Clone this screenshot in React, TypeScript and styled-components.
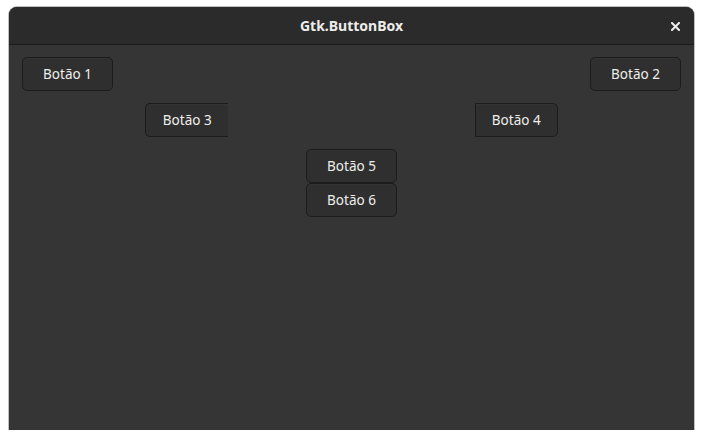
import React from "react";
import styled, { createGlobalStyle } from "styled-components";

const Global = createGlobalStyle`
  html, body { margin: 0; padding: 0; background: #ffffff; }
  body { font-family: "Noto Sans", "Open Sans", sans-serif; }
`;

const Page = styled.div`
  padding: 7px 0 0 9px;
`;

const Window = styled.div`
  width: 685px;
  height: 423px;
  background: #353535;
  border-radius: 8px 8px 0 0;
  overflow: hidden;
  display: flex;
  flex-direction: column;
  box-shadow: 0 0 0 1px rgba(0, 0, 0, 0.25);
`;

const HeaderBar = styled.div`
  height: 37px;
  flex: none;
  background: #2b2b2b;
  border-bottom: 1px solid #1b1b1b;
  display: flex;
  align-items: center;
  justify-content: center;
  position: relative;
`;

const Title = styled.div`
  color: #eeeeec;
  font-weight: 700;
  font-size: 14px;
`;

const CloseButton = styled.div`
  position: absolute;
  right: 12px;
  top: 12px;
  width: 14px;
  height: 14px;
  display: flex;
  align-items: center;
  justify-content: center;
`;

const Content = styled.div`
  padding: 12px 13px;
  display: flex;
  flex-direction: column;
  gap: 12px;
`;

const Row = styled.div<{ $justify: string }>`
  display: flex;
  justify-content: ${(p) => p.$justify};
`;

const Column = styled.div`
  display: flex;
  flex-direction: column;
  align-items: center;
`;

const Button = styled.button<{ $w: number; $noRight?: boolean; $squareLeft?: boolean }>`
  width: ${(p) => p.$w}px;
  height: 34px;
  box-sizing: border-box;
  background: #2f2f2f;
  border: 1px solid #1c1c1c;
  border-radius: 5px;
  ${(p) => (p.$noRight ? "border-right: none; border-top-right-radius: 0; border-bottom-right-radius: 0;" : "")}
  ${(p) => (p.$squareLeft ? "border-top-left-radius: 0; border-bottom-left-radius: 0;" : "")}
  color: #eeeeec;
  font-family: "Noto Sans", "Open Sans", sans-serif;
  font-size: 13.5px;
  padding: 0;
  display: flex;
  align-items: center;
  justify-content: center;
  box-shadow: inset 0 1px rgba(255, 255, 255, 0.02);
`;

export default function App() {
  return (
    <>
      <Global />
      <Page>
        <Window>
          <HeaderBar>
            <Title>Gtk.ButtonBox</Title>
            <CloseButton>
              <svg width="9" height="9" viewBox="0 0 9 9">
                <path d="M1 1 L8 8 M8 1 L1 8" stroke="#eeeeec" strokeWidth="2" strokeLinecap="square" />
              </svg>
            </CloseButton>
          </HeaderBar>
          <Content>
            <Row $justify="space-between">
              <Button $w={91}>Botão 1</Button>
              <Button $w={91}>Botão 2</Button>
            </Row>
            <Row $justify="space-around">
              <Button $w={83} $noRight>Botão 3</Button>
              <Button $w={83} $squareLeft>Botão 4</Button>
            </Row>
            <Column>
              <Button $w={91}>Botão 5</Button>
              <Button $w={91}>Botão 6</Button>
            </Column>
          </Content>
        </Window>
      </Page>
    </>
  );
}
